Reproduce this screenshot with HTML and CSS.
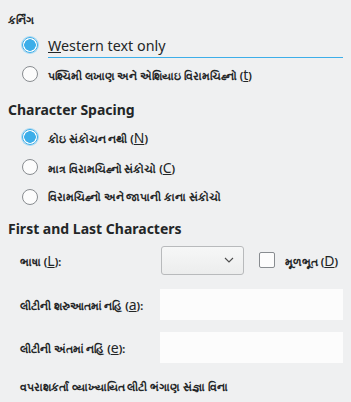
FILE: index.html
```html
<!DOCTYPE html>
<html lang="en">
<head>
    <meta charset="UTF-8">
    <meta name="viewport" content="width=device-width, initial-scale=1.0">
    <title>Asian Typography</title>
    <link rel="stylesheet" href="styles.css">
</head>
<body>

    <div class="group-label">કર્નિંગ</div>
    <div class="radio-list">
        <label class="radio-row focused">
            <span class="radio checked"></span>
            <span class="big-text"><u>W</u>estern text only</span>
        </label>
        <label class="radio-row tall">
            <span class="radio"></span>
            <span class="small-text">પશ્ચિમી લખાણ અને એશિયાઇ વિરામચિહ્નો (<u>t</u>)</span>
        </label>
    </div>

    <h2 class="heading">Character Spacing</h2>
    <div class="radio-list">
        <label class="radio-row">
            <span class="radio checked"></span>
            <span class="small-text">કોઇ સંકોચન નથી (<u>N</u>)</span>
        </label>
        <label class="radio-row">
            <span class="radio"></span>
            <span class="small-text">માત્ર વિરામચિહ્નો સંકોચો (<u>C</u>)</span>
        </label>
        <label class="radio-row">
            <span class="radio"></span>
            <span class="small-text">વિરામચિહ્નો અને જાપાની કાના સંકોચો</span>
        </label>
    </div>

    <h2 class="heading second">First and Last Characters</h2>
    <div class="form">
        <div class="form-row lang-row">
            <span class="small-text label">ભાષા (<u>L</u>):</span>
            <div class="combo">
                <svg width="10" height="6" viewBox="0 0 10 6"><path d="M1 1l4 4 4-4" fill="none" stroke="#4d4d4d" stroke-width="1.1"/></svg>
            </div>
            <span class="checkbox"></span>
            <span class="small-text">મૂળભૂત (<u>D</u>)</span>
        </div>
        <div class="form-row field-row first">
            <span class="small-text label">લીટીની શરુઆતમાં નહિ (<u>a</u>):</span>
            <div class="field"></div>
        </div>
        <div class="form-row field-row">
            <span class="small-text label">લીટીની અંતમાં નહિં (<u>e</u>):</span>
            <div class="field"></div>
        </div>
        <div class="small-text last-line">વપરાશકર્તા વ્યાખ્યાયિત લીટી ભંગાણ સંજ્ઞા વિના</div>
    </div>

</body>
</html>
```

FILE: styles.css
```css
body {
    margin: 0;
    padding: 0 8px;
    background: #eff0f1;
    color: #232627;
    font-family: 'Noto Sans', 'DejaVu Sans', sans-serif;
}

.group-label {
    padding-top: 12px;
    height: 20px;
    line-height: 16px;
    font-size: 10.5px;
    font-weight: bold;
}

.radio-list {
    display: flex;
    flex-direction: column;
    padding-left: 14px;
}

.radio-row {
    display: flex;
    align-items: center;
    gap: 10px;
    height: 30px;
}

.radio-row.tall {
    height: 32px;
}

.radio-row.focused {
    height: 26px;
}

.radio-row.focused .big-text {
    flex: 1;
    line-height: 22px;
    margin-top: 2px;
    border-bottom: 1px solid #3daee9;
}

.radio {
    width: 14px;
    height: 14px;
    border: 1px solid #888c90;
    border-radius: 50%;
    background: #fcfcfc;
    flex-shrink: 0;
    box-sizing: content-box;
}

.radio.checked {
    border-color: #3daee9;
    background: radial-gradient(circle, #3daee9 0, #3daee9 5.5px, #fcfcfc 6px);
    box-shadow: 0 0 0 1px #a9d9f4;
}

.big-text {
    font-size: 14.3px;
}

.small-text {
    font-size: 10.5px;
    font-weight: bold;
}

.small-text u {
    font-size: 14px;
    font-weight: normal;
}

.heading {
    margin: 8px 0 0;
    height: 24px;
    line-height: 24px;
    font-size: 14px;
    font-weight: bold;
}

.heading.second {
    margin-top: 5px;
}

.form {
    display: flex;
    flex-direction: column;
    padding-left: 12px;
}

.form-row {
    display: flex;
    align-items: center;
}

.lang-row {
    margin-top: 4px;
    height: 30px;
}

.label {
    width: 141px;
    flex-shrink: 0;
}

.combo {
    width: 83px;
    height: 29px;
    border: 1px solid #b8babc;
    border-radius: 3px;
    background: linear-gradient(#f6f7f7, #eceded);
    display: flex;
    align-items: center;
    justify-content: flex-end;
    padding-right: 9px;
    box-sizing: border-box;
}

.checkbox {
    width: 14px;
    height: 14px;
    border: 1px solid #888c90;
    border-radius: 2px;
    background: #fcfcfc;
    margin: 0 10px 0 15px;
}

.field-row {
    height: 31px;
    margin-top: 12px;
}

.field-row.first {
    margin-top: 14px;
}

.field-row .label {
    width: 140px;
}

.field {
    flex: 1;
    align-self: stretch;
    background: #fcfcfc;
}

.last-line {
    margin-top: 16px;
    line-height: 16px;
}
```
